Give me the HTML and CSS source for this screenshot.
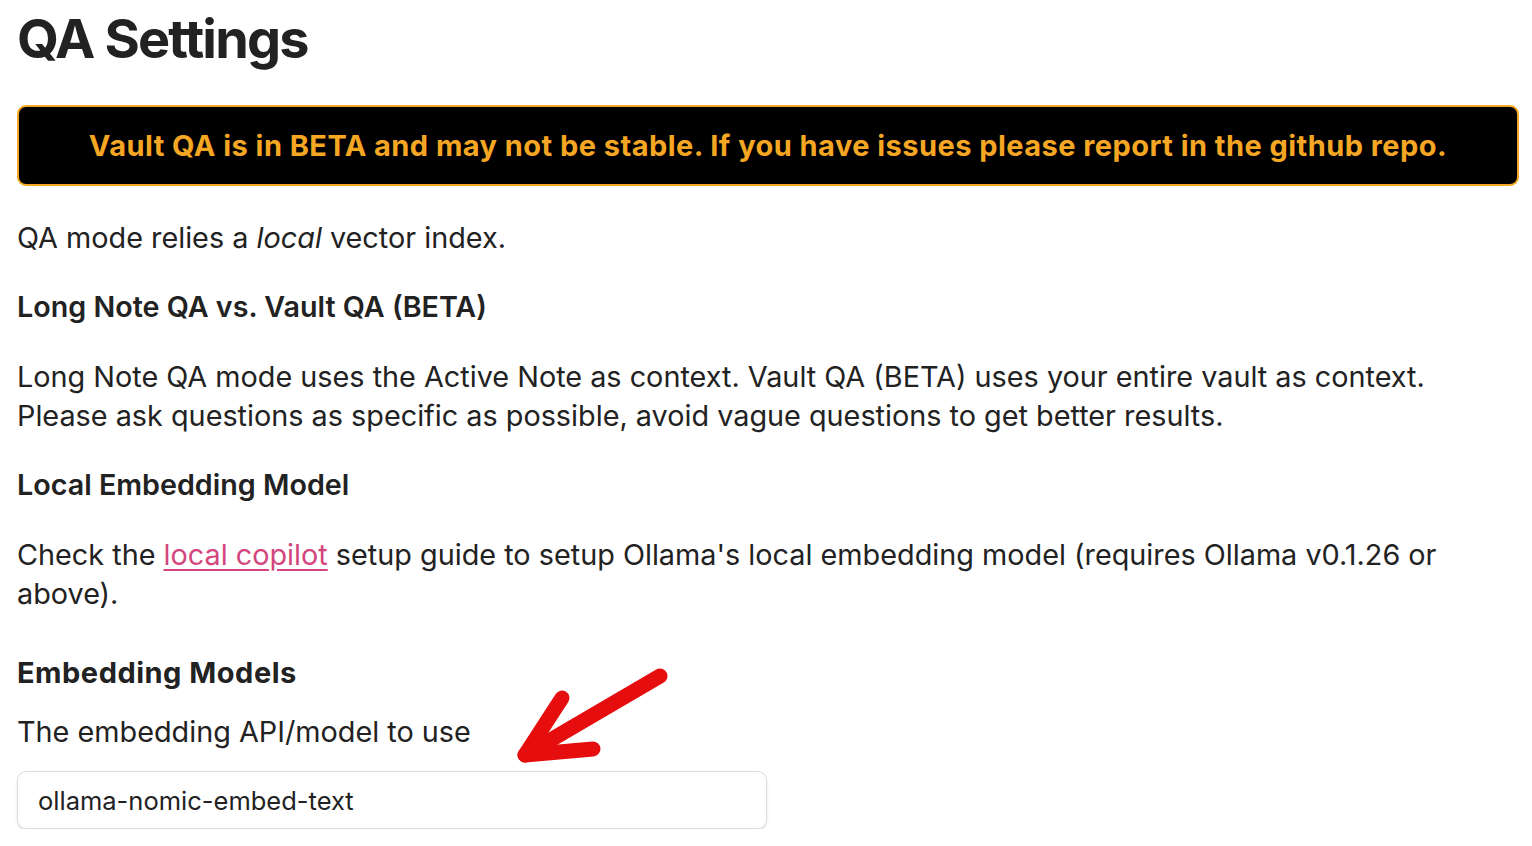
FILE: index.html
```html
<!DOCTYPE html>
<html lang="en">
<head>
<meta charset="utf-8">
<title>QA Settings</title>
<link rel="stylesheet" href="styles.css">
</head>
<body>
<main class="page">
  <h1 class="title">QA Settings</h1>
  <div class="banner">Vault QA is in BETA and may not be stable. If you have issues please report in the github repo.</div>
  <p class="text first">QA mode relies a <em>local</em> vector index.</p>
  <h3 class="heading">Long Note QA vs. Vault QA (BETA)</h3>
  <p class="text">Long Note QA mode uses the Active Note as context. Vault QA (BETA) uses your entire vault as context. Please ask questions as specific as possible, avoid vague questions to get better results.</p>
  <h3 class="heading">Local Embedding Model</h3>
  <p class="text">Check the <a class="link" href="#">local copilot</a> setup guide to setup Ollama's local embedding model (requires Ollama v0.1.26 or above).</p>
  <section class="setting">
    <div class="setting-name">Embedding Models</div>
    <div class="setting-desc">The embedding API/model to use</div>
    <div class="select">ollama-nomic-embed-text</div>
    <svg class="arrow" width="170" height="110" viewBox="0 0 170 110">
      <g fill="none" stroke="#e50d0d" stroke-width="15" stroke-linecap="round" stroke-linejoin="round">
        <path d="M155 16 L20 95"/>
        <path d="M57 38 L20 95 L88 89"/>
      </g>
    </svg>
  </section>
</main>
</body>
</html>
```
FILE: styles.css
```css
html, body {
  margin: 0;
  padding: 0;
  background: #ffffff;
}
body {
  font-family: Inter, "Noto Sans", "Liberation Sans", sans-serif;
  color: #222222;
}
.page {
  padding: 0 13px 0 17px;
  display: flex;
  flex-direction: column;
}
.title {
  margin: 6px 0 0 0;
  font-size: 54px;
  line-height: 65px;
  font-weight: 700;
  letter-spacing: -1.8px;
  color: #222222;
}
.banner {
  margin-top: 34px;
  box-sizing: border-box;
  height: 81px;
  border: 2px solid #f5a623;
  border-radius: 9px;
  background: #000000;
  color: #f5a623;
  font-size: 29px;
  font-weight: 700;
  letter-spacing: 0.45px;
  display: flex;
  align-items: center;
  justify-content: center;
}
.text {
  margin: 31px 0 0 0;
  font-size: 28.8px;
  line-height: 39px;
}
.text.first {
  margin-top: 32px;
}
.heading {
  margin: 30px 0 0 0;
  font-size: 28.7px;
  line-height: 39px;
  font-weight: 600;
}
.link {
  color: #d3467d;
  text-decoration: underline;
  text-underline-offset: 4px;
}
.setting {
  position: relative;
  margin-top: 40px;
  display: flex;
  flex-direction: column;
}
.setting-name {
  font-size: 29px;
  line-height: 39px;
  font-weight: 700;
  letter-spacing: 0.5px;
}
.setting-desc {
  margin-top: 20px;
  font-size: 28.8px;
  line-height: 39px;
}
.select {
  margin-top: 20px;
  width: 750px;
  height: 58px;
  box-sizing: border-box;
  border: 1px solid #dcdcdc;
  border-radius: 9px;
  box-shadow: 0 2px 3px rgba(0,0,0,0.1);
  padding: 0 20px;
  font-size: 25.5px;
  display: flex;
  align-items: center;
}
.arrow {
  position: absolute;
  left: 488px;
  top: 7px;
}
```
